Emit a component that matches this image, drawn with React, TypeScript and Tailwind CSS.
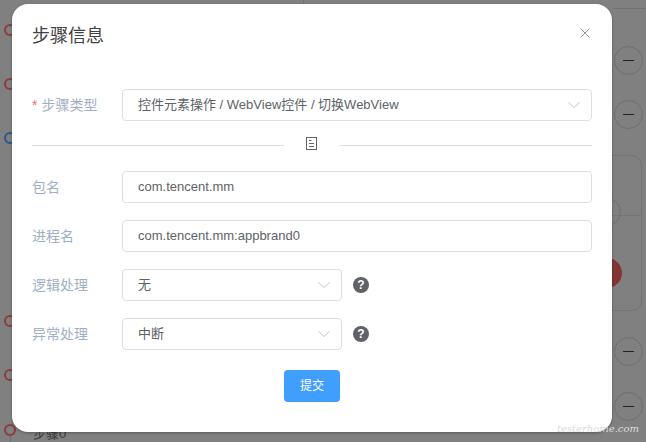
import type { ReactNode } from "react";

const font = "font-['Liberation_Sans','Noto_Sans_CJK_SC',sans-serif]";

function Ring({ top, color }: { top: string; color: string }) {
  return <div className={`absolute left-[4px] h-[12px] w-[12px] rounded-full border-2 bg-[#808080] ${top} ${color}`} />;
}

function MinusButton({ top }: { top: string }) {
  return (
    <div className={`absolute left-[614px] flex h-[29px] w-[29px] items-center justify-center rounded-full border border-[#6e6e6e] ${top}`}>
      <div className="h-px w-[11px] bg-[#222]" />
    </div>
  );
}

function Backdrop() {
  return (
    <>
      <div className="absolute left-[303px] top-0 h-[4px] w-px bg-[#707070]" />
      <div className="absolute left-[612px] top-[8px] h-px w-[34px] bg-[#727272]" />
      <div className="absolute left-[10px] top-[436px] h-[6px] w-px bg-[#6e6e6e]" />
      <Ring top="top-[24px]" color="border-[#8c3a3a]" />
      <Ring top="top-[78px]" color="border-[#8c3a3a]" />
      <Ring top="top-[132px]" color="border-[#27578f]" />
      <Ring top="top-[315px]" color="border-[#8c3a3a]" />
      <Ring top="top-[369px]" color="border-[#8c3a3a]" />
      <Ring top="top-[424px]" color="border-[#8c3a3a]" />
      <div className="absolute left-[33px] top-[424px] text-[13px] text-[#3a3a3a]">步骤0</div>
      <MinusButton top="top-[46px]" />
      <MinusButton top="top-[100px]" />
      <MinusButton top="top-[337px]" />
      <MinusButton top="top-[392px]" />
      <div className="absolute left-[590px] top-[155px] h-[156px] w-[52px] rounded-[10px] border border-[#747474]" />
      <div className="absolute left-[590px] top-[215px] h-px w-[52px] bg-[#747474]" />
      <div className="absolute left-[593px] top-[198px] h-[28px] w-[28px] rounded-full border border-[#6e6e6e]" />
      <div className="absolute left-[592px] top-[258px] h-[30px] w-[30px] rounded-full bg-[#833535]" />
    </>
  );
}

function Field({ label, required, children }: { label: string; required?: boolean; children: ReactNode }) {
  return (
    <div className="flex h-8 items-center">
      <label className="w-[90px] shrink-0 text-[14px] text-[#a0afc4]">
        {required && <span className="mr-1 text-[#f56c6c]">*</span>}
        {label}
      </label>
      {children}
    </div>
  );
}

function TextBox({ value }: { value: string }) {
  return (
    <div className="flex h-8 flex-1 items-center rounded border border-[#dcdfe6] bg-white px-[15px] text-[13px] text-[#606266]">
      {value}
    </div>
  );
}

function SelectBox({ value, className }: { value: string; className: string }) {
  return (
    <div className={`flex h-8 items-center justify-between rounded border border-[#dcdfe6] bg-white pl-[15px] pr-[11px] text-[13px] text-[#606266] ${className}`}>
      <span>{value}</span>
      <svg viewBox="0 0 12 6" className="h-[6px] w-3 text-[#c0c4cc]" fill="none" stroke="currentColor" strokeWidth="1">
        <path d="M0.5 0.5L6 5.5L11.5 0.5" />
      </svg>
    </div>
  );
}

function Help() {
  return (
    <div className="ml-[11px] flex h-4 w-4 items-center justify-center rounded-full bg-[#606266] text-[12px] font-bold leading-none text-white">
      ?
    </div>
  );
}

export default function App() {
  return (
    <div className={`relative h-[442px] w-[646px] overflow-hidden bg-[#808080] ${font}`}>
      <Backdrop />
      <div className="absolute left-[12px] top-[4px] flex h-[428px] w-[600px] flex-col rounded-2xl bg-white px-5 shadow-[0_1px_3px_rgba(0,0,0,0.3)]">
        <div className="flex h-[62px] items-start justify-between pt-[19px]">
          <span className="mt-[1px] text-[18px] leading-6 text-[#3f4144]">步骤信息</span>
          <svg viewBox="0 0 10 10" className="mr-[2px] mt-[5px] h-[10px] w-[10px] text-[#909399]" fill="none" stroke="currentColor" strokeWidth="1">
            <path d="M0.5 0.5L9.5 9.5M9.5 0.5L0.5 9.5" />
          </svg>
        </div>
        <div className="mt-[23px]">
          <Field label="步骤类型" required>
            <SelectBox value="控件元素操作 / WebView控件 / 切换WebView" className="flex-1" />
          </Field>
        </div>
        <div className="mt-[16px] flex h-[13px] items-center">
          <div className="mt-[3px] h-px w-[252px] bg-[#dcdfe6]" />
          <svg viewBox="0 0 11 13" className="mx-[22px] h-[13px] w-[11px] text-[#666]" fill="none" stroke="currentColor" strokeWidth="1">
            <rect x="0.5" y="0.5" width="10" height="12" />
            <path d="M3 3.5h2.5M3 6.5h5M3 9.5h5" />
          </svg>
          <div className="mt-[3px] h-px flex-1 bg-[#dcdfe6]" />
        </div>
        <div className="mt-[21px] flex flex-col gap-[17px]">
          <Field label="包名">
            <TextBox value="com.tencent.mm" />
          </Field>
          <Field label="进程名">
            <TextBox value="com.tencent.mm:appbrand0" />
          </Field>
          <Field label="逻辑处理">
            <SelectBox value="无" className="w-[220px]" />
            <Help />
          </Field>
          <Field label="异常处理">
            <SelectBox value="中断" className="w-[220px]" />
            <Help />
          </Field>
        </div>
        <div className="mt-[20px] flex justify-center">
          <button className="h-8 w-14 rounded bg-[#409eff] text-[12px] text-white">提交</button>
        </div>
      </div>
      <div className="absolute left-[557px] top-[423px] font-['DejaVu_Serif',serif] text-[10px] italic leading-3 text-[#dcdcdc]">testerhome.com</div>
    </div>
  );
}
